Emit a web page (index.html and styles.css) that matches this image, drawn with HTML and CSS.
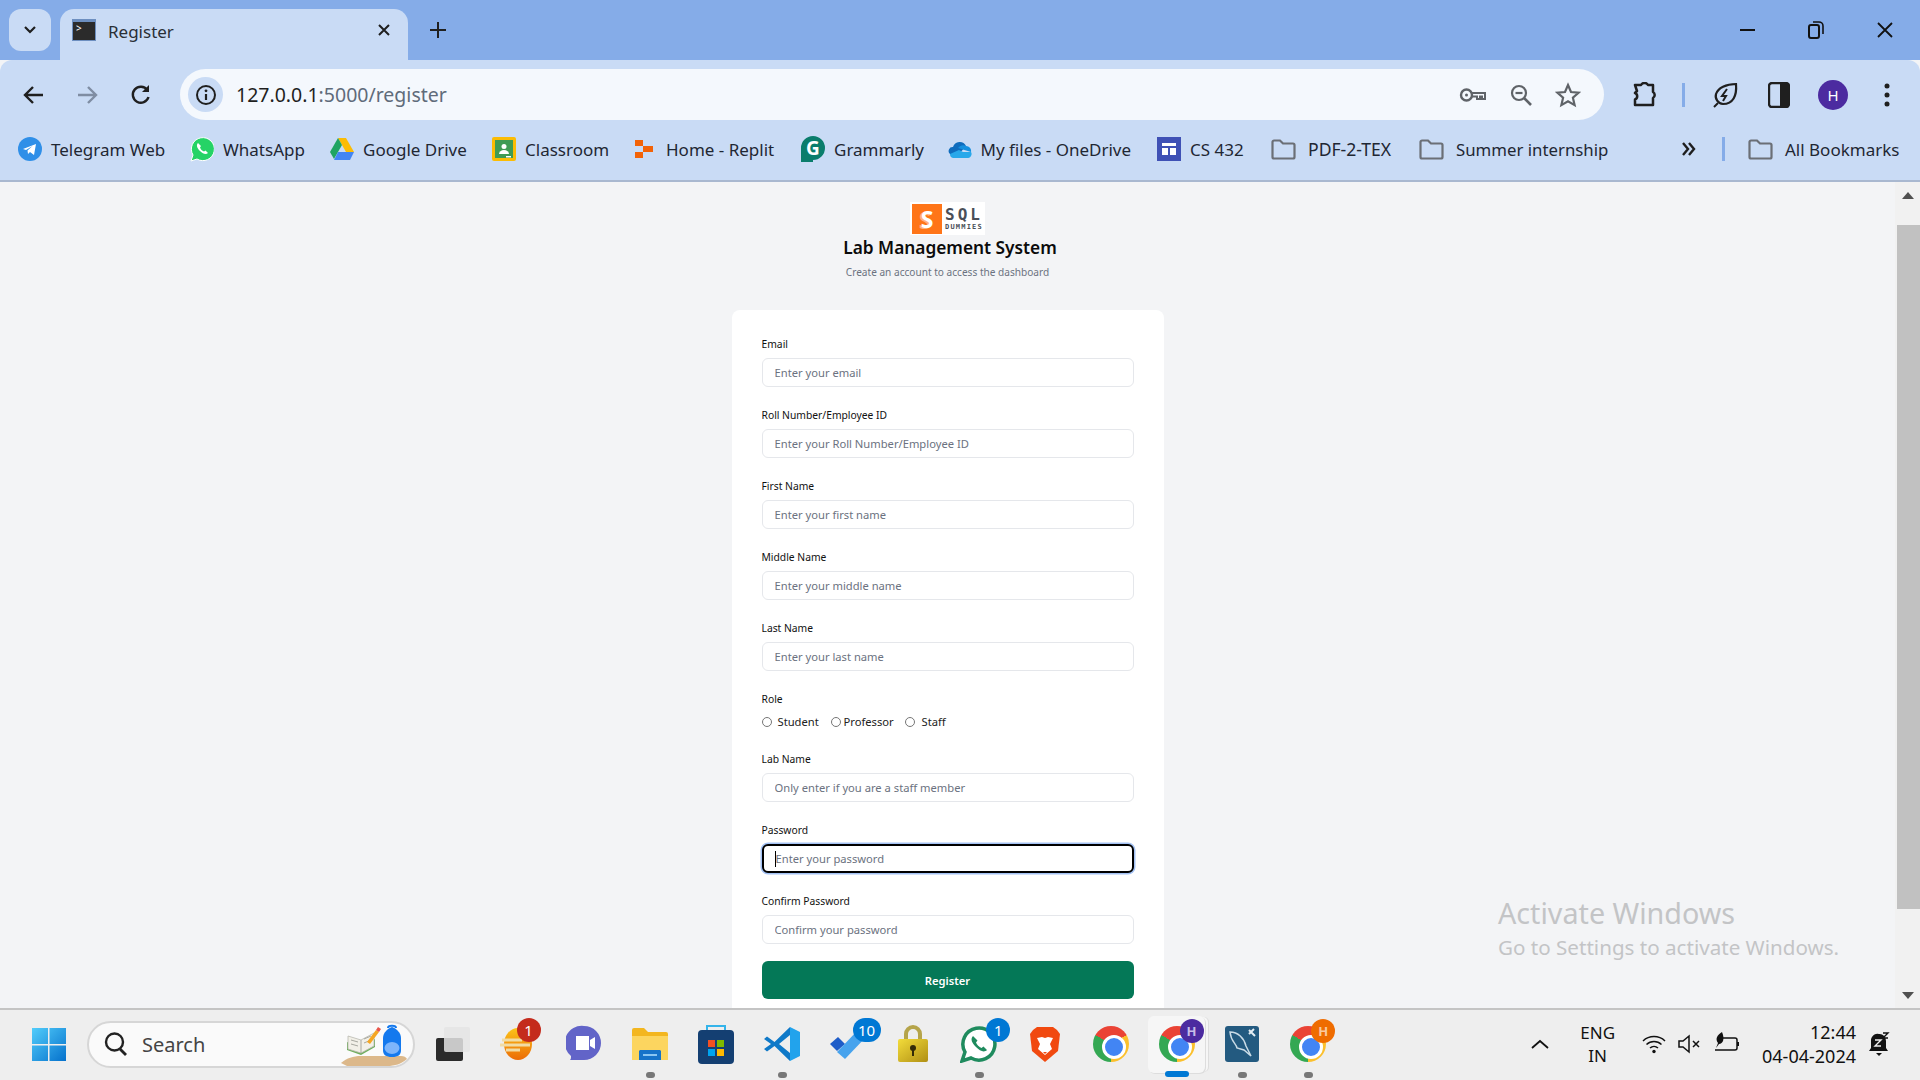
FILE: index.html
```html
<!DOCTYPE html>
<html>
<head>
    <title>Register</title>
    <link rel="stylesheet" href="styles.css">
</head>
<body>
    <!-- Pestañas -->
    <div class="tabstrip">
        <div class="tab-search">
            <svg width="14" height="10" viewBox="0 0 14 10"><path d="M2 2l5 5 5-5" fill="none" stroke="#1f1f1f" stroke-width="2.2"/></svg>
        </div>
        <div class="tab">
            <div class="favicon"><span class="favicon-prompt">&gt;</span></div>
            <span class="tab-title">Register</span>
            <svg class="tab-close" width="14" height="14" viewBox="0 0 14 14"><path d="M2 2l10 10M12 2L2 12" stroke="#1f1f1f" stroke-width="2"/></svg>
        </div>
        <svg class="tab-new" width="18" height="18" viewBox="0 0 18 18"><path d="M9 1v16M1 9h16" stroke="#1f1f1f" stroke-width="2"/></svg>
        <div class="window-controls">
            <svg width="16" height="16" viewBox="0 0 16 16"><path d="M0 8h15" stroke="#111" stroke-width="2"/></svg>
            <svg width="16" height="18" viewBox="0 0 16 18"><rect x="1" y="4" width="10" height="13" rx="2" fill="none" stroke="#111" stroke-width="2"/><path d="M5 1h6a4 4 0 0 1 4 4v8" fill="none" stroke="#111" stroke-width="1.6"/></svg>
            <svg width="18" height="18" viewBox="0 0 18 18"><path d="M2 2l14 14M16 2L2 16" stroke="#111" stroke-width="1.8"/></svg>
        </div>
    </div>

    <!-- Barra de direcciones -->
    <div class="toolbar">
        <svg class="nav-btn" width="22" height="20" viewBox="0 0 22 20"><path d="M20 10H3M10 2l-8 8 8 8" fill="none" stroke="#1f1f1f" stroke-width="2.4"/></svg>
        <svg class="nav-btn" width="22" height="20" viewBox="0 0 22 20"><path d="M2 10h17M12 2l8 8-8 8" fill="none" stroke="#7f8da3" stroke-width="2.4"/></svg>
        <svg class="nav-btn nav-reload" width="22" height="22" viewBox="0 0 22 22"><path d="M18.500 13a8 8 0 1 1-1.200-7" fill="none" stroke="#1f1f1f" stroke-width="2.4"/><path d="M19 1v7h-7z" fill="#1f1f1f"/></svg>
        <div class="omnibox">
            <div class="site-info">
                <svg width="22" height="22" viewBox="0 0 22 22"><circle cx="11" cy="11" r="9" fill="none" stroke="#1f1f1f" stroke-width="2"/><path d="M11 10v6" stroke="#1f1f1f" stroke-width="2.2"/><circle cx="11" cy="6.800" r="1.400" fill="#1f1f1f"/></svg>
            </div>
            <span class="url"><span class="url-host">127.0.0.1</span>:5000/register</span>
            <div class="omni-icons">
                <svg width="28" height="16" viewBox="0 0 28 16"><circle cx="7.500" cy="8" r="5.500" fill="none" stroke="#5f6368" stroke-width="2.4"/><circle cx="7.500" cy="8" r="1.500" fill="#5f6368"/><path d="M13 6h13v6h-3V9.500h-2V12h-3V9.500h-5" fill="none" stroke="#5f6368" stroke-width="2"/></svg>
                <svg width="24" height="24" viewBox="0 0 24 24"><circle cx="10" cy="10" r="7" fill="none" stroke="#5f6368" stroke-width="2.2"/><path d="M15 15l7 7" stroke="#5f6368" stroke-width="2.6"/><path d="M6.500 10h7" stroke="#5f6368" stroke-width="2.2"/></svg>
                <svg width="26" height="26" viewBox="0 0 26 26"><path d="M13 3l3 7 7.500.7-5.600 5 1.700 7.400L13 19.200l-6.600 3.900L8.100 15.700l-5.600-5L10 10z" fill="none" stroke="#5f6368" stroke-width="2.2"/></svg>
            </div>
        </div>
        <div class="toolbar-right">
            <svg class="tb-puzzle" width="26" height="26" viewBox="0 0 26 26"><path d="M3 3h6a4 4 0 0 1 7 0h5v7a3.500 3.500 0 0 1 0 6v7H3v-5.500a3.500 3.500 0 0 0 0-6.500l2-2z" fill="none" stroke="#1f1f1f" stroke-width="2.500" stroke-linejoin="round"/></svg>
            <span class="toolbar-sep tb-sep"></span>
            <svg class="tb-leaf" width="26" height="26" viewBox="0 0 26 26"><path d="M24 2c1 12-3 20-13 20a8 8 0 0 1-7-10C6 6 14 2 24 2z" fill="none" stroke="#1f1f1f" stroke-width="2.200"/><path d="M15 7l-5 7h4l-3 5M2 25l4-4" fill="none" stroke="#1f1f1f" stroke-width="2"/></svg>
            <svg class="tb-panel" width="22" height="26" viewBox="0 0 22 26"><rect x="1" y="1" width="20" height="24" rx="3" fill="none" stroke="#1f1f1f" stroke-width="2.400"/><path d="M12 1h6a3 3 0 0 1 3 3v18a3 3 0 0 1-3 3h-6z" fill="#1f1f1f"/></svg>
            <div class="avatar">H</div>
            <svg class="tb-dots" width="8" height="26" viewBox="0 0 8 26"><circle cx="4" cy="4" r="2.500" fill="#1f1f1f"/><circle cx="4" cy="13" r="2.500" fill="#1f1f1f"/><circle cx="4" cy="22" r="2.500" fill="#1f1f1f"/></svg>
        </div>
    </div>

    <!-- Marcadores -->
    <div class="bookmarks">
        <div class="bm bm-telegram">
            <svg width="24" height="24" viewBox="0 0 24 24"><circle cx="12" cy="12" r="12" fill="#2f8fe8"/><path d="M5 12l13-5-2 11-4-3-2 2-.5-3.500 5-4.500-6.500 4z" fill="#fff"/></svg>
            <span>Telegram Web</span>
        </div>
        <div class="bm bm-whatsapp">
            <svg width="24" height="26" viewBox="0 0 24 26"><path d="M1 25l2-6a11.500 11.500 0 1 1 4 4z" fill="#25d366" stroke="#fff" stroke-width="1"/><path d="M8 7c-2 2-1 5 2 8s6 4 8 2l-2.500-2.500-1.500 1c-2-.7-3.300-2-4-4l1-1.500z" fill="#fff"/></svg>
            <span>WhatsApp</span>
        </div>
        <div class="bm bm-drive">
            <svg width="24" height="24" viewBox="0 0 24 24"><path d="M8 1h8l8 14h-8z" fill="#fbbc04"/><path d="M8 1l4 7-8 14-4-7z" fill="#1fa463"/><path d="M8 15h16l-4 8H4z" fill="#4285f4"/></svg>
            <span>Google Drive</span>
        </div>
        <div class="bm bm-classroom">
            <svg width="24" height="24" viewBox="0 0 24 24"><rect width="24" height="24" rx="2" fill="#fbbc04"/><rect x="3" y="3" width="18" height="18" fill="#3f9b55"/><circle cx="12" cy="9.500" r="2.500" fill="#fff"/><path d="M7 17a5 4 0 0 1 10 0z" fill="#fff"/><path d="M14 19h5v1.500h-5z" fill="#fff"/></svg>
            <span>Classroom</span>
        </div>
        <div class="bm bm-replit">
            <svg width="20" height="24" viewBox="0 0 20 24"><path d="M1 3h8v6H1zM9 9h10v6H9zM1 15h8v6H1z" fill="#f26207"/></svg>
            <span>Home - Replit</span>
        </div>
        <div class="bm bm-grammarly">
            <svg width="24" height="28" viewBox="0 0 24 28"><path d="M12 1a12 12 0 0 1 12 12 12 12 0 0 1-12 12v2H0V13A12 12 0 0 1 12 1z" fill="#0a7d6c"/><text class="bm-g" x="12" y="20" text-anchor="middle">G</text></svg>
            <span>Grammarly</span>
        </div>
        <div class="bm bm-onedrive">
            <svg width="24" height="18" viewBox="0 0 24 18"><path d="M5 7a7 7 0 0 1 13-1l-7 8H2A4 4 0 0 1 5 7z" fill="#0f6cbd"/><path d="M10 8a6 6 0 0 1 8-2 5 5 0 0 1 5 6z" fill="#1490df"/><path d="M2 14l9-4 4 2 8 0a4 4 0 0 1-4 6H5a4 4 0 0 1-3-4z" fill="#28a8ea"/></svg>
            <span>My files - OneDrive</span>
        </div>
        <div class="bm bm-cs">
            <svg width="24" height="24" viewBox="0 0 24 24"><rect width="24" height="24" fill="#3f51b5"/><path d="M5 6h14v3H5zM5 11h6v7H5zM13 11h6v7h-6z" fill="#fff"/></svg>
            <span>CS 432</span>
        </div>
        <div class="bm bm-pdf">
            <svg width="25" height="21" viewBox="0 0 25 21"><use href="#folder"/></svg>
            <span>PDF-2-TEX</span>
        </div>
        <div class="bm bm-summer">
            <svg width="25" height="21" viewBox="0 0 25 21"><use href="#folder"/></svg>
            <span>Summer internship</span>
        </div>
        <div class="bm-end">
            <svg width="15" height="14" viewBox="0 0 15 14"><path d="M2 1l5 6-5 6M8 1l5 6-5 6" fill="none" stroke="#1f1f1f" stroke-width="2.400"/></svg>
            <span class="toolbar-sep"></span>
            <div class="bm">
                <svg width="25" height="21" viewBox="0 0 25 21"><defs><g id="folder"><path d="M1.500 3a1.500 1.500 0 0 1 1.500-1.500h6l3 3h10a1.500 1.500 0 0 1 1.500 1.500v12a1.500 1.500 0 0 1-1.500 1.500H3A1.500 1.500 0 0 1 1.500 18z" fill="none" stroke="#6b6f76" stroke-width="2.200"/></g></defs><use href="#folder"/></svg>
                <span>All Bookmarks</span>
            </div>
        </div>
    </div>

    <!-- Pagina -->
    <div class="viewport">
        <div class="page">
            <div class="brand">
                <div class="logo">
                    <span class="logo-s">S</span>
                    <span class="logo-words"><span class="logo-sql">SQL</span><span class="logo-dummies">DUMMIES</span></span>
                </div>
                <h1>Lab Management System</h1>
                <p>Create an account to access the dashboard</p>
            </div>
            <div class="card">
                <div class="field">
                    <label>Email</label>
                    <input type="text" placeholder="Enter your email">
                </div>
                <div class="field">
                    <label>Roll Number/Employee ID</label>
                    <input type="text" placeholder="Enter your Roll Number/Employee ID">
                </div>
                <div class="field">
                    <label>First Name</label>
                    <input type="text" placeholder="Enter your first name">
                </div>
                <div class="field">
                    <label>Middle Name</label>
                    <input type="text" placeholder="Enter your middle name">
                </div>
                <div class="field">
                    <label>Last Name</label>
                    <input type="text" placeholder="Enter your last name">
                </div>
                <div class="field field-role">
                    <label>Role</label>
                    <div class="roles">
                        <span class="role role-student"><i class="radio"></i>Student</span>
                        <span class="role role-prof"><i class="radio"></i>Professor</span>
                        <span class="role role-staff"><i class="radio"></i>Staff</span>
                    </div>
                </div>
                <div class="field">
                    <label>Lab Name</label>
                    <input type="text" placeholder="Only enter if you are a staff member">
                </div>
                <div class="field">
                    <label>Password</label>
                    <div class="fake-focus"><span class="caret"></span>Enter your password</div>
                </div>
                <div class="field">
                    <label>Confirm Password</label>
                    <input type="text" placeholder="Confirm your password">
                </div>
                <button>Register</button>
            </div>
        </div>
        <div class="scrollbar">
            <span class="arrow-up"></span>
            <div class="scroll-track"><div class="scroll-thumb"></div></div>
            <span class="arrow-down"></span>
        </div>
        <div class="activate">
            <div class="activate-big">Activate Windows</div>
            <div class="activate-small">Go to Settings to activate Windows.</div>
        </div>
    </div>

    <!-- Barra de tareas -->
    <div class="taskbar">
        <svg class="win-logo" width="36" height="36" viewBox="0 0 36 36">
            <defs><linearGradient id="winblue" x1="0" y1="0" x2="1" y2="1"><stop offset="0" stop-color="#52cdfb"/><stop offset="1" stop-color="#0571cc"/></linearGradient></defs>
            <path d="M1 2h16v16H1zM18.500 2H35v16H18.500zM1 19.500h16V35H1zM18.500 19.500H35V35H18.500z" fill="url(#winblue)"/>
        </svg>
        <div class="search-pill">
            <svg width="24" height="26" viewBox="0 0 24 26"><circle cx="10.500" cy="11" r="8.500" fill="none" stroke="#222" stroke-width="2.400"/><path d="M16 18l6 6" stroke="#222" stroke-width="2.800"/></svg>
            <span class="search-text">Search</span>
            <svg class="search-art" width="66" height="44" viewBox="0 0 66 44">
                <path d="M0 41c6-5 12-7 20-7h40c3 0 5 1 6 3-6 5-12 7-20 7H6z" fill="#dcb88a"/>
                <path d="M6 20l14 5 14-8v8l-14 8-14-5z" fill="#6fae5c"/>
                <path d="M7 14l13 4 13-7v13l-13 7-13-4z" fill="#f2f0e8" stroke="#b9b9b0" stroke-width=".8"/>
                <path d="M10 18l7 2M10 22l7 2M23 17l7-3M23 21l7-3M20 18v13" stroke="#a8a8a0" stroke-width="1"/>
                <path d="M26 20l9-12 3 2-9 12z" fill="#f5a623"/>
                <path d="M35 8l2-3 3 2-2 3z" fill="#e8554a"/>
                <path d="M51 35c-6 0-9-2-9-7V16c0-5 4-9 9-11 5 2 9 6 9 11v12c0 5-3 7-9 7z" fill="#1479ee"/>
                <path d="M47 6c0-3 8-3 8 0" fill="none" stroke="#1479ee" stroke-width="2"/>
                <ellipse cx="51" cy="26" rx="7.500" ry="6" fill="#7db5fb"/>
            </svg>
        </div>
        <div class="slots">
            <div class="slot">
                <svg width="36" height="36" viewBox="0 0 36 36"><rect x="1" y="12" width="27" height="23" rx="2" fill="#2b2b2b"/><rect x="9" y="1" width="26" height="25" rx="2" fill="#e4e4e4" fill-opacity=".85"/></svg>
            </div>
            <div class="slot slot-sun">
                <svg width="34" height="34" viewBox="0 0 34 34"><defs><linearGradient id="sun" x1="0" y1="0" x2="0" y2="1"><stop offset="0" stop-color="#fcc419"/><stop offset="1" stop-color="#ec6c06"/></linearGradient></defs><ellipse cx="18" cy="17" rx="14" ry="16" fill="url(#sun)"/><path d="M2 13h20M0 18h30M6 23h14" stroke="#f1dca4" stroke-width="3"/></svg>
                <span class="badge badge-red">1</span>
            </div>
            <div class="slot">
                <svg width="36" height="38" viewBox="0 0 36 38"><path d="M18 1a17 17 0 0 1 0 34H4c1-1 1-2 1-4A17 17 0 0 1 18 1z" fill="#6264c8"/><path d="M10 11h13v14H10z" fill="#fff"/><path d="M24 15l5-3v12l-5-3z" fill="#fff"/></svg>
            </div>
            <div class="slot">
                <svg width="36" height="36" viewBox="0 0 36 36"><path d="M0 4a2 2 0 0 1 2-2h10l4 4h18a2 2 0 0 1 2 2v26H0z" fill="#f3b61f"/><path d="M0 10h36v24H0z" fill="#fcd55f"/><path d="M8 24h20l1 1v9H7v-9z" fill="#1673c9"/><path d="M11 29h14" stroke="#8ac6f2" stroke-width="2"/></svg>
                <span class="run-dot"></span>
            </div>
            <div class="slot">
                <svg width="36" height="42" viewBox="0 0 36 42"><path d="M9 8V3h18v5" fill="none" stroke="#34b4ea" stroke-width="2"/><rect y="7" width="36" height="34" rx="4" fill="#143f72"/><path d="M10 17h7v7h-7z" fill="#f25022"/><path d="M19 17h7v7h-7z" fill="#7fba00"/><path d="M10 26h7v7h-7z" fill="#00a4ef"/><path d="M19 26h7v7h-7z" fill="#ffb900"/></svg>
            </div>
            <div class="slot">
                <svg width="36" height="44" viewBox="0 0 36 36"><path d="M26 1l10 5v24l-10 5z" fill="#22a3ec"/><path d="M26 1L10.500 16 3 10.500 0 13l7 5-7 5 3 2.500 7.500-5.500L26 35v-8L15 18 26 9z" fill="#0f79c8"/></svg>
                <span class="run-dot"></span>
            </div>
            <div class="slot">
                <svg width="36" height="30" viewBox="0 0 36 30"><path d="M0 15l8-7 7 7-8 7z" fill="#1e5cc8"/><path d="M7 23L28 1l8 7-21 22z" fill="#47a3ed"/></svg>
                <span class="badge badge-blue badge-wide">10</span>
            </div>
            <div class="slot">
                <svg width="32" height="38" viewBox="0 0 32 38"><defs><linearGradient id="gold" x1="0" y1="0" x2="1" y2="1"><stop offset="0" stop-color="#f3dc3a"/><stop offset="1" stop-color="#b08f14"/></linearGradient></defs><path d="M9 16V9a7 7 0 0 1 14 0v7" fill="none" stroke="#b5a44a" stroke-width="4"/><rect x="1" y="14" width="30" height="23" rx="2" fill="url(#gold)"/><circle cx="16" cy="23" r="3" fill="#332b08"/><path d="M15 24h2v7h-2z" fill="#332b08"/></svg>
            </div>
            <div class="slot">
                <svg width="38" height="38" viewBox="0 0 38 38"><path d="M2 36l3-9a16 16 0 1 1 6 6z" fill="#fff" stroke="#1f8b5e" stroke-width="3.500"/><path d="M13 11c-3 3-1 7 3 11s8 6 11 3l-3.500-3.500-2 1.500c-2.500-1-4.500-3-5.500-5.500l1.500-2z" fill="#1f8b5e"/></svg>
                <span class="badge badge-blue">1</span>
                <span class="run-dot"></span>
            </div>
            <div class="slot">
                <svg width="30" height="36" viewBox="0 0 30 36"><path d="M7 1h16l4 3 3 4-2 17-13 11L2 25 0 8l3-4z" fill="#f1490f"/><path d="M7 12l5-1 3 1 3-1 5 1-3 6 2 5-7 6-7-6 2-5z" fill="#fff"/><path d="M13 26h4l-2 2z" fill="#f1490f"/></svg>
            </div>
            <div class="slot">
                <div class="chrome"></div>
            </div>
            <div class="slot slot-active">
                <div class="chrome"></div>
                <span class="badge badge-h badge-purple">H</span>
                <span class="active-bar"></span>
            </div>
            <div class="slot">
                <svg width="34" height="36" viewBox="0 0 34 36"><rect width="34" height="36" rx="3" fill="#235a80"/><path d="M5 6c8 0 14 6 16 14l5 10-7-6-7-2c-1-5-6-6-7-16z" fill="none" stroke="#c9dbe6" stroke-width="1.500"/><path d="M24 4l6 6M29 3l-5 5" stroke="#e3edf3" stroke-width="2"/></svg>
                <span class="run-dot"></span>
            </div>
            <div class="slot">
                <div class="chrome"></div>
                <span class="badge badge-h badge-orange">H</span>
                <span class="run-dot"></span>
            </div>
        </div>
        <div class="tray">
            <svg width="18" height="10" viewBox="0 0 18 10"><path d="M1 9l8-7 8 7" fill="none" stroke="#111" stroke-width="1.800"/></svg>
            <div class="lang">ENG<br>IN</div>
            <div class="tray-icons">
                <svg width="24" height="20" viewBox="0 0 24 20"><path d="M1 7a16 16 0 0 1 22 0M4.500 10.500a11 11 0 0 1 15 0M8 14a6 6 0 0 1 8 0" fill="none" stroke="#111" stroke-width="1.500"/><circle cx="12" cy="17.500" r="1.700" fill="#111"/></svg>
                <svg width="24" height="20" viewBox="0 0 24 20"><path d="M1 7v6h4l6 5V2L5 7z" fill="none" stroke="#111" stroke-width="1.500"/><path d="M15 7l6 6M21 7l-6 6" stroke="#111" stroke-width="1.500"/></svg>
                <svg width="26" height="24" viewBox="0 0 26 24"><path d="M9 6h12a2 2 0 0 1 2 2v8a2 2 0 0 1-2 2H1" fill="none" stroke="#111" stroke-width="1.500"/><path d="M23 10h2v4h-2z" fill="#111"/><path d="M8 0c-5 3-7 7-4 11l-2 5 3-4c4 0 6-5 3-12z" fill="#111"/></svg>
            </div>
            <div class="clock">12:44<br>04-04-2024</div>
            <div class="bell">
                <svg width="22" height="26" viewBox="0 0 22 26"><path d="M11 3a6.500 6.500 0 0 1 7 7v7l2 3H1l2-3v-7a6.500 6.500 0 0 1 8-7z" fill="#111"/><path d="M8 22h6l-3 3z" fill="#111"/><path d="M7 9h6l-6 6h6" fill="none" stroke="#eee" stroke-width="1.400"/><path d="M15 2h5l-5 5h5" fill="#eee" stroke="#111" stroke-width="1.400"/></svg>
            </div>
        </div>
    </div>
</body>
</html>
```

FILE: styles.css
```css
* {
    box-sizing: border-box;
}

body {
    margin: 0;
    width: 1920px;
    height: 1080px;
    overflow: hidden;
    display: flex;
    flex-direction: column;
    font-family: "Noto Sans", "Open Sans", sans-serif;
    background-color: #f3f4f6;
}

/* Pestañas */
.tabstrip {
    height: 60px;
    flex-shrink: 0;
    display: flex;
    background-color: #85ace8;
    padding-top: 9px;
    padding-left: 9px;
}

.tab-search {
    width: 42px;
    height: 42px;
    border-radius: 12px;
    background-color: #c9dbf5;
    display: flex;
    align-items: center;
    justify-content: center;
}

.tab {
    position: relative;
    width: 348px;
    height: 51px;
    margin-left: 9px;
    background-color: #c9dbf5;
    border-radius: 14px 14px 0 0;
    display: flex;
    align-items: center;
    padding: 0 17px 9px 12px;
}

.favicon {
    width: 24px;
    height: 22px;
    background-color: #2b2b2b;
    border: 1px solid #6d8fc0;
    border-top-width: 3px;
    color: #fff;
    font-size: 10px;
    line-height: 12px;
    padding-left: 3px;
}

.favicon-prompt {
    display: block;
}

.tab-title {
    margin-left: 12px;
    padding-top: 2px;
    font-size: 17px;
    color: #2a2f36;
    flex: 1;
}

.tab-new {
    margin: 12px 0 0 21px;
}

.window-controls {
    margin-left: auto;
    display: flex;
    align-items: center;
    gap: 52px;
    height: 42px;
    padding-right: 26px;
}

/* Barra de direcciones */
.toolbar {
    height: 60px;
    flex-shrink: 0;
    display: flex;
    align-items: center;
    background-color: #c9dbf5;
    border-radius: 12px 12px 0 0;
    padding-left: 23px;
    padding-top: 9px;
    gap: 31px;
}

.nav-reload {
    margin-left: 1px;
}

.omnibox {
    width: 1424px;
    height: 51px;
    margin-left: -3px;
    background-color: #f4f8fd;
    border-radius: 26px;
    display: flex;
    align-items: center;
    padding-left: 8px;
    padding-right: 23px;
}

.site-info {
    width: 35px;
    height: 35px;
    border-radius: 50%;
    background-color: #c9dbf5;
    display: flex;
    align-items: center;
    justify-content: center;
}

.url {
    margin-left: 13px;
    font-size: 19.5px;
    color: #5f6b7a;
    flex: 1;
}

.url-host {
    color: #1f1f1f;
}

.omni-icons {
    display: flex;
    align-items: center;
    gap: 22px;
}

.toolbar-right {
    display: flex;
    align-items: center;
    margin-left: -3px;
}

.tb-sep { margin-left: 24px; }
.tb-leaf { margin-left: 27px; }
.tb-panel { margin-left: 30px; }
.avatar { margin-left: 28px; }
.tb-dots { margin-left: 35px; }

.toolbar-sep {
    display: block;
    width: 3px;
    height: 24px;
    background-color: #85ace8;
}

.avatar {
    width: 30px;
    height: 30px;
    border-radius: 50%;
    background-color: #4c2ba0;
    color: #fff;
    font-size: 15px;
    text-align: center;
    line-height: 30px;
}

/* Marcadores */
.bookmarks {
    height: 62px;
    flex-shrink: 0;
    display: flex;
    align-items: center;
    background-color: #c9dbf5;
    border-bottom: 2px solid #a9b8d0;
    padding-left: 18px;
    padding-bottom: 2px;
}

.bm {
    display: flex;
    flex-shrink: 0;
    align-items: center;
    gap: 9px;
    font-size: 17px;
    color: #1f2733;
    white-space: nowrap;
}

.bm span {
    display: block;
}

.bm-telegram { width: 172px; }
.bm-whatsapp { width: 140px; }
.bm-drive { width: 162px; }
.bm-classroom { width: 142px; }
.bm-replit { width: 167px; gap: 12px; }
.bm-grammarly { width: 146.5px; }
.bm-onedrive { width: 209.5px; }
.bm-cs { width: 114px; }
.bm-pdf { width: 148px; gap: 12px; font-size: 17.6px; }
.bm-summer { width: 262px; gap: 12px; font-size: 16.8px; }

.bm-g {
    font-family: "Noto Sans", sans-serif;
    font-size: 19px;
    font-weight: 700;
    fill: #fff;
}

.bm-end {
    display: flex;
    align-items: center;
    gap: 26px;
}

.bm-end .bm {
    gap: 12px;
    margin-left: -3px;
}

/* Pagina */
.viewport {
    position: relative;
    flex: 1;
    min-height: 0;
    overflow: hidden;
    display: flex;
}

.page {
    flex: 1;
    display: flex;
    flex-direction: column;
    align-items: center;
    padding-top: 20px;
}

.brand {
    display: flex;
    flex-direction: column;
    flex-shrink: 0;
    align-items: center;
    height: 108px;
}

.logo {
    width: 75px;
    height: 33px;
    background-color: #fff;
    display: flex;
    align-items: center;
    padding-left: 2px;
    gap: 3px;
}

.logo-s {
    width: 30px;
    height: 30px;
    background-color: #ff7518;
    color: #fff;
    font-size: 23px;
    font-weight: 700;
    text-align: center;
    line-height: 30px;
    text-shadow: -2px 1px 0 #ffb27d;
}

.logo-words {
    display: flex;
    flex-direction: column;
    color: #4a4f58;
    font-family: "DejaVu Sans Mono", monospace;
    font-weight: 700;
}

.logo-sql {
    font-size: 16px;
    line-height: 16px;
    letter-spacing: 3px;
}

.logo-dummies {
    font-size: 7px;
    line-height: 8px;
    letter-spacing: 1.2px;
}

h1 {
    margin: 0 0 0 5px;
    font-size: 17.3px;
    line-height: 26px;
    font-weight: 600;
    color: #0b0b0b;
}

.brand p {
    margin: 4px 0 0;
    font-size: 10.1px;
    line-height: 14px;
    color: #6b7280;
}

.card {
    width: 432px;
    flex-shrink: 0;
    background-color: #fff;
    border-radius: 8px;
    padding: 26px 30px;
}

.field {
    height: 71px;
}

.field label {
    display: block;
    font-size: 10.3px;
    line-height: 16px;
    height: 22px;
    color: #111;
}

.field input,
.fake-focus {
    display: block;
    width: 100%;
    height: 29px;
    border: 1px solid #e5e7eb;
    border-radius: 6px;
    padding: 0 12px;
    font-family: inherit;
    font-size: 11.2px;
    color: #6b7280;
    background-color: #fff;
    outline: none;
}

.field input::placeholder {
    color: #6b7280;
    opacity: 1;
}

.fake-focus {
    display: flex;
    align-items: center;
    border: 2px solid #000;
    box-shadow: 0 0 0 1.5px #a4c2f4;
    padding-left: 12px;
    position: relative;
}

.caret {
    position: absolute;
    left: 11px;
    top: 5px;
    width: 1px;
    height: 16px;
    background-color: #000;
}

.field-role {
    height: 60px;
}

.roles {
    display: flex;
    align-items: center;
    font-size: 11.2px;
    color: #222;
    margin-top: 1px;
}

.role {
    display: flex;
    align-items: center;
}

.radio {
    display: block;
    width: 10px;
    height: 10px;
    border: 1px solid #767676;
    border-radius: 50%;
}

.role-student { width: 69px; gap: 6px; }
.role-prof { width: 74px; gap: 3px; }
.role-staff { gap: 7px; }

button {
    display: block;
    width: 100%;
    height: 38px;
    margin-top: -3px;
    border: none;
    border-radius: 6px;
    background-color: #047857;
    color: #fff;
    font-family: inherit;
    font-size: 11.2px;
    font-weight: 600;
}

.scrollbar {
    width: 25px;
    flex-shrink: 0;
    background-color: #f1f1f1;
    display: flex;
    flex-direction: column;
    align-items: center;
}

.arrow-up,
.arrow-down {
    display: block;
    width: 0;
    height: 0;
    border-left: 6px solid transparent;
    border-right: 6px solid transparent;
}

.arrow-up {
    margin-top: 10px;
    border-bottom: 7px solid #505050;
}

.arrow-down {
    margin-bottom: 9px;
    border-top: 7px solid #505050;
}

.scroll-track {
    flex: 1;
    width: 100%;
    padding-top: 26px;
    padding-bottom: 80px;
    padding-left: 2px;
}

.scroll-thumb {
    height: 684px;
    background-color: #c1c1c1;
}

.activate {
    position: absolute;
    left: 1498px;
    top: 712px;
    color: #c3c4c6;
}

.activate-big {
    font-size: 28.7px;
    line-height: 38px;
}

.activate-small {
    font-size: 20.6px;
    line-height: 30px;
}

/* Barra de tareas */
.taskbar {
    height: 72px;
    flex-shrink: 0;
    display: flex;
    align-items: center;
    background-color: #eeeeee;
    border-top: 2px solid #c4c4c4;
    padding-left: 31px;
    padding-bottom: 2px;
}

.search-pill {
    width: 328px;
    height: 47px;
    margin-left: 20px;
    background-color: #fafafa;
    border: 2px solid #d6d6d6;
    border-radius: 24px;
    display: flex;
    align-items: center;
    padding-left: 15px;
    position: relative;
}

.search-text {
    margin-left: 14px;
    font-size: 20px;
    color: #444;
}

.search-art {
    position: absolute;
    right: 6px;
    bottom: 0;
}

.slots {
    display: flex;
    margin-left: 5px;
}

.slot {
    position: relative;
    width: 65.8px;
    height: 56px;
    display: flex;
    align-items: center;
    justify-content: center;
}

.slot-sun {
    padding-right: 4px;
}

.slot-sun .badge {
    right: 11px;
}

.slot-active::before {
    content: "";
    position: absolute;
    left: 4px;
    right: 5px;
    top: 0;
    bottom: -1px;
    background-color: #f6f6f6;
    border-radius: 6px;
    box-shadow: 1px 1px 0 #ddd, 4px 0 0 -1px #f6f6f6, 5px 0 0 -1px #ddd;
}

.badge {
    position: absolute;
    top: 2px;
    right: 8px;
    min-width: 24px;
    height: 24px;
    border-radius: 12px;
    color: #fff;
    font-size: 15px;
    line-height: 24px;
    text-align: center;
}

.badge-red { background-color: #c42b1c; }
.badge-blue { background-color: #0078d4; right: 2px; }
.badge-wide { width: 28px; right: 0; }

.badge-h {
    font-weight: 700;
    font-size: 13px;
    right: 6px;
    top: 3px;
}

.badge-purple { background-color: #4c2ba0; color: #c7bde8; }
.badge-orange { background-color: #ef6c00; color: #f9c9a0; }

.run-dot {
    position: absolute;
    left: 50%;
    bottom: -6px;
    width: 9px;
    height: 6px;
    margin-left: -4px;
    border-radius: 3px;
    background-color: #777;
}

.active-bar {
    position: absolute;
    left: 50%;
    bottom: -5px;
    width: 24px;
    height: 6px;
    margin-left: -12px;
    border-radius: 3px;
    background-color: #0078d4;
}

.chrome {
    position: relative;
    width: 36px;
    height: 36px;
    border-radius: 50%;
    background: conic-gradient(from -60deg, #ea4335 0 120deg, #fbc02d 120deg 240deg, #34a853 240deg 360deg);
}

.chrome::after {
    content: "";
    position: absolute;
    left: 9px;
    top: 9px;
    width: 18px;
    height: 18px;
    border-radius: 50%;
    background-color: #4285f4;
    border: 3px solid #fff;
}

.tray {
    margin-left: auto;
    display: flex;
    align-items: center;
    padding-right: 30px;
    color: #111;
    font-size: 18px;
}

.lang {
    margin-left: 31px;
    line-height: 23px;
    text-align: center;
    font-size: 17px;
}

.tray-icons {
    display: flex;
    align-items: center;
    gap: 12px;
    margin-left: 27px;
}

.clock {
    margin-left: 22px;
    line-height: 24px;
    text-align: right;
}

.bell {
    margin-left: 12px;
    display: flex;
}
```
